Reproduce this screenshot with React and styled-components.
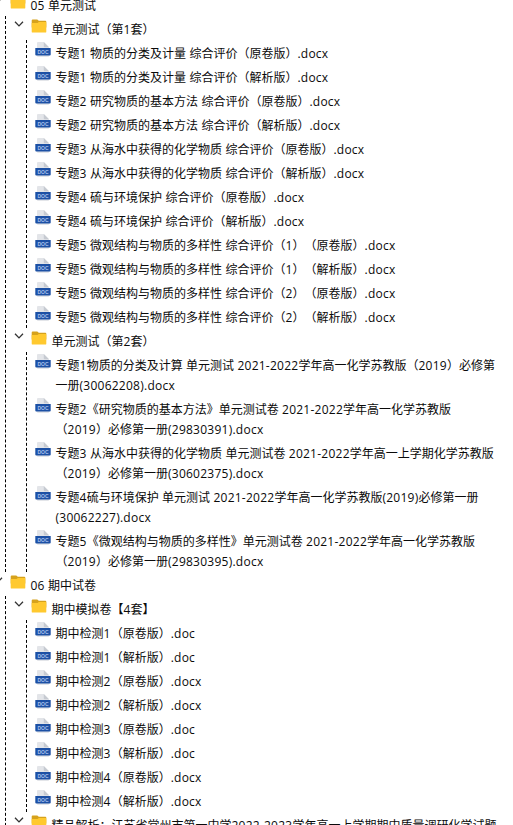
import React from 'react';
import styled, { createGlobalStyle } from 'styled-components';

const Global = createGlobalStyle`
  body { margin: 0; background: #fff; overflow: hidden; }
  * { box-sizing: border-box; }
`;

const Tree = styled.main`
  width: 513px;
  height: 825px;
  overflow: hidden;
  color: #0a0a0a;
  font: 12px/20px "Open Sans", "Noto Sans CJK SC", sans-serif;
  text-spacing-trim: space-all;
`;
const Scrolled = styled.div`
  margin-top: -8px;
`;
const Branch = styled.div`
  margin-left: ${(p) => (p.$nested ? 20 : 5)}px;
  border-left: 1px dashed #000;
`;
const FolderRow = styled.div`
  display: flex;
  height: 24px;
  padding-left: ${(p) => (p.$root ? 0 : 7)}px;
  margin-left: ${(p) => (p.$root ? -8 : 0)}px;
`;
const ChevronIcon = styled.svg`
  flex: none;
  width: 12px;
  height: 12px;
  margin: 2px 6px 0 0;
`;
const FolderIcon = styled.svg`
  flex: none;
  width: 16px;
  height: 16px;
  margin-top: 3px;
`;
const FileRow = styled.div`
  display: flex;
  padding: 2px 0 2px 8px;
`;
const FileIcon = styled.svg`
  flex: none;
  width: 16px;
  height: 16px;
`;
const Label = styled.span`
  display: flex;
  flex-direction: column;
  margin: ${(p) => (p.$folder ? '4px 0 0 4.4px' : '2px 0 -2px 4.5px')};
  white-space: nowrap;
`;
const Latin = styled.span`
  letter-spacing: 0.25px;
`;

const Chevron = () => (
  <ChevronIcon viewBox="0 0 12 12">
    <path d="M2 3.8 6 7.9 10 3.8" fill="none" stroke="#333" strokeWidth="1.3" />
  </ChevronIcon>
);
const FolderGlyph = () => (
  <FolderIcon viewBox="0 0 16 16">
    <g transform="translate(0 .5)">
      <path d="M.7 1a1 1 0 0 1 1-1h4.6l1.5 1.2h6.5a1 1 0 0 1 1 1V8H.7z" fill="#d6a21c" />
      <path d="M.7 3.5h5.8L7.8 2.4h6.8a.7.7 0 0 1 .7.7v9.1a.9.9 0 0 1-.9.9H1.6a.9.9 0 0 1-.9-.9z" fill="#ffc92f" />
    </g>
  </FolderIcon>
);
const FileGlyph = () => (
  <FileIcon viewBox="0 0 16 16">
    <path d="M3 0h5.8L14 5.2V14a1 1 0 0 1-1 1H3a1 1 0 0 1-1-1V1a1 1 0 0 1 1-1z" fill="#e3e5e9" />
    <path d="M8.8 0 14 5.2H9.6a.8.8 0 0 1-.8-.8z" fill="#c6cad1" />
    <path d="M.3 6h15.4v6.4a1 1 0 0 1-1 1H1.3a1 1 0 0 1-1-1z" fill="#1c50a4" />
    <text x="8" y="11.5" textAnchor="middle" fontFamily="Liberation Sans" fontWeight="bold" fontSize="5" fill="#a9c1ec">DOC</text>
  </FileIcon>
);

const Line = ({ text }) => (
  <span>
    {text.split(/([ -~]+)/).map((part, i) => (i % 2 ? <Latin key={i}>{part}</Latin> : part))}
  </span>
);

const Folder = ({ name, root }) => (
  <FolderRow $root={root}>
    <Chevron />
    <FolderGlyph />
    <Label $folder><Line text={name} /></Label>
  </FolderRow>
);
const File = ({ lines }) => (
  <FileRow>
    <FileGlyph />
    <Label>{lines.map((l) => <Line key={l} text={l} />)}</Label>
  </FileRow>
);

const both = (title, ext = '.docx') => ['原卷版', '解析版'].map((v) => [`${title}（${v}）${ext}`]);

const data = [
  {
    name: '05 单元测试',
    folders: [
      {
        name: '单元测试（第1套）',
        files: [
          ...both('专题1 物质的分类及计量 综合评价'),
          ...both('专题2 研究物质的基本方法 综合评价'),
          ...both('专题3 从海水中获得的化学物质 综合评价'),
          ...both('专题4 硫与环境保护 综合评价'),
          ...both('专题5 微观结构与物质的多样性 综合评价（1）'),
          ...both('专题5 微观结构与物质的多样性 综合评价（2）'),
        ],
      },
      {
        name: '单元测试（第2套）',
        files: [
          ['专题1物质的分类及计算 单元测试 2021-2022学年高一化学苏教版（2019）必修第', '一册(30062208).docx'],
          ['专题2《研究物质的基本方法》单元测试卷 2021-2022学年高一化学苏教版', '（2019）必修第一册(29830391).docx'],
          ['专题3 从海水中获得的化学物质 单元测试卷 2021-2022学年高一上学期化学苏教版', '（2019）必修第一册(30602375).docx'],
          ['专题4硫与环境保护 单元测试 2021-2022学年高一化学苏教版(2019)必修第一册', '(30062227).docx'],
          ['专题5《微观结构与物质的多样性》单元测试卷 2021-2022学年高一化学苏教版', '（2019）必修第一册(29830395).docx'],
        ],
      },
    ],
  },
  {
    name: '06 期中试卷',
    folders: [
      {
        name: '期中模拟卷【4套】',
        files: [
          ...both('期中检测1', '.doc'),
          ...both('期中检测2'),
          ...both('期中检测3', '.doc'),
          ...both('期中检测4'),
        ],
      },
      { name: '精品解析：江苏省常州市第一中学2022-2023学年高一上学期期中质量调研化学试题', files: [] },
    ],
  },
];

export default function App() {
  return (
    <Tree>
      <Global />
      <Scrolled>
        {data.map((section) => (
          <section key={section.name}>
            <Folder root name={section.name} />
            <Branch>
              {section.folders.map((folder) => (
                <div key={folder.name}>
                  <Folder name={folder.name} />
                  <Branch $nested>
                    {folder.files.map((lines) => <File key={lines.join()} lines={lines} />)}
                  </Branch>
                </div>
              ))}
            </Branch>
          </section>
        ))}
      </Scrolled>
    </Tree>
  );
}
